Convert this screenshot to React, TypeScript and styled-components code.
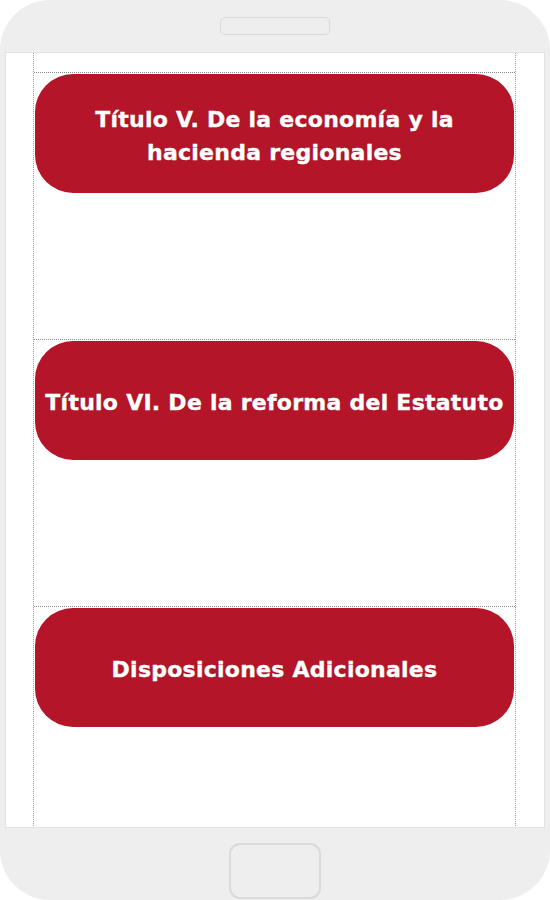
import { createGlobalStyle } from "styled-components";
import styled from "styled-components";

const GlobalStyle = createGlobalStyle`
  html, body {
    margin: 0;
    padding: 0;
    background: #ffffff;
  }
  body {
    font-family: "Liberation Sans", Arial, sans-serif;
  }
`;

const Phone = styled.div`
  width: 550px;
  height: 900px;
  background: #eeeeee;
  border-radius: 50px;
  display: flex;
  flex-direction: column;
  overflow: hidden;
`;

const TopBar = styled.div`
  height: 52px;
  display: flex;
  justify-content: center;
  align-items: flex-start;
`;

const Speaker = styled.div`
  margin-top: 17px;
  width: 108px;
  height: 16px;
  border: 1px solid #d9d9d9;
  border-radius: 5px;
  background: #eeeeee;
`;

const Screen = styled.div`
  margin: 0 5px;
  height: 776px;
  background: #ffffff;
  border: 1px solid #e2e2e2;
  box-sizing: border-box;
  overflow: hidden;
  padding: 0 28px 0 27px;
`;

const List = styled.div`
  height: 100%;
  border-left: 1px dotted #9a9a9a;
  border-right: 1px dotted #9a9a9a;
  padding-top: 19px;
  display: flex;
  flex-direction: column;
`;

const Section = styled.div`
  flex: 0 0 267px;
  box-sizing: border-box;
  border-top: 1px dotted #8a8a8a;
  padding: 1px 1px 0;
`;

const TitleButton = styled.button`
  width: 100%;
  height: 119px;
  background: #b51528;
  border: none;
  border-radius: 38px;
  color: #ffffff;
  font-family: "DejaVu Sans", Verdana, sans-serif;
  font-weight: 700;
  font-size: 22px;
  line-height: 33px;
  letter-spacing: 0.25px;
  padding: 4px 8px 0;
  text-align: center;
  -webkit-text-stroke: 0.4px #ffffff;
  text-shadow: 0 0 1px rgba(80, 0, 10, 0.6);
  cursor: pointer;
`;

const BottomBar = styled.div`
  flex: 1;
  display: flex;
  justify-content: center;
  align-items: flex-start;
`;

const HomeButton = styled.div`
  margin-top: 15px;
  width: 88px;
  height: 52px;
  border: 2px solid #dadada;
  border-radius: 11px;
`;

const titles = [
  "Título V. De la economía y la hacienda regionales",
  "Título VI. De la reforma del Estatuto",
  "Disposiciones Adicionales",
];

export default function App() {
  return (
    <>
      <GlobalStyle />
      <Phone>
        <TopBar>
          <Speaker />
        </TopBar>
        <Screen>
          <List>
            {titles.map((t) => (
              <Section key={t}>
                <TitleButton>{t}</TitleButton>
              </Section>
            ))}
          </List>
        </Screen>
        <BottomBar>
          <HomeButton />
        </BottomBar>
      </Phone>
    </>
  );
}
